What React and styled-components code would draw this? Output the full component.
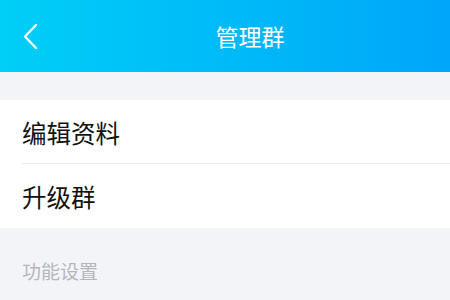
import React from 'react';
import styled, { createGlobalStyle } from 'styled-components';

const GlobalStyle = createGlobalStyle`
  html, body {
    margin: 0;
    padding: 0;
    background: #f3f4f8;
  }
  body {
    font-family: "Noto Sans CJK SC", "Noto Sans", sans-serif;
    -webkit-font-smoothing: antialiased;
  }
`;

const Page = styled.div`
  width: 450px;
  height: 300px;
  overflow: hidden;
  background: #f3f4f8;
  display: flex;
  flex-direction: column;
`;

const Header = styled.header`
  height: 72px;
  flex-shrink: 0;
  display: grid;
  grid-template-columns: 60px 1fr 10px;
  align-items: center;
  background: linear-gradient(90deg, #00cff7, #00a6f9);
  color: #fff;
`;

const BackButton = styled.button`
  display: flex;
  align-items: center;
  justify-content: flex-start;
  padding: 0 0 0 23px;
  height: 100%;
  border: none;
  background: none;
  cursor: pointer;
`;

const Title = styled.h1`
  margin: 0;
  text-align: center;
  font-size: 23px;
  font-weight: 400;
  color: #fff;
`;

const Group = styled.section`
  margin-top: ${(p) => p.$top || 0}px;
  background: #fff;
`;

const Row = styled.div`
  height: ${(p) => p.$height}px;
  display: flex;
  align-items: center;
  padding-left: 22px;
  font-size: 24.5px;
  color: #111;
  position: relative;
  ${(p) =>
    p.$divider &&
    `&::after {
      content: '';
      position: absolute;
      left: 22px;
      right: 0;
      bottom: 0;
      height: 1px;
      background: #ececef;
    }`}
`;

const SectionLabel = styled.div`
  padding: 29px 22px 0;
  font-size: 19px;
  color: #b4b6bd;
`;

const BackIcon = () => (
  <svg width="15" height="26" viewBox="0 0 15 26" fill="none">
    <path d="M13 2 L2 13.5 L13 25" stroke="#fff" strokeWidth="2.2" strokeLinecap="round" strokeLinejoin="round" />
  </svg>
);

export default function App() {
  return (
    <Page>
      <GlobalStyle />
      <Header>
        <BackButton aria-label="返回">
          <BackIcon />
        </BackButton>
        <Title>管理群</Title>
        <div />
      </Header>
      <Group $top={28}>
        <Row $height={64} $divider>编辑资料</Row>
        <Row $height={64}>升级群</Row>
      </Group>
      <SectionLabel>功能设置</SectionLabel>
    </Page>
  );
}
